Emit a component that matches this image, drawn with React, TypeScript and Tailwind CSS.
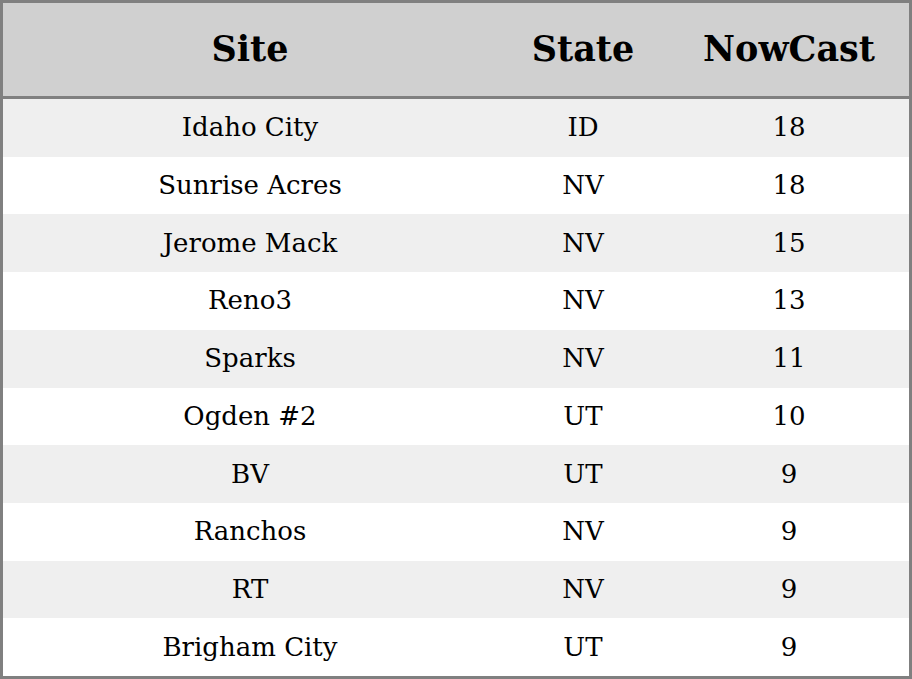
const rows = [
  { site: "Idaho City", state: "ID", nowcast: 18 },
  { site: "Sunrise Acres", state: "NV", nowcast: 18 },
  { site: "Jerome Mack", state: "NV", nowcast: 15 },
  { site: "Reno3", state: "NV", nowcast: 13 },
  { site: "Sparks", state: "NV", nowcast: 11 },
  { site: "Ogden #2", state: "UT", nowcast: 10 },
  { site: "BV", state: "UT", nowcast: 9 },
  { site: "Ranchos", state: "NV", nowcast: 9 },
  { site: "RT", state: "NV", nowcast: 9 },
  { site: "Brigham City", state: "UT", nowcast: 9 },
];

export default function App() {
  return (
    <div className="w-[912px] h-[679px] border-[3px] border-[#808080] bg-white font-['DejaVu_Serif',serif] text-black flex flex-col">
      {/* Header */}
      <div className="grid grid-cols-[494px_172px_240px] h-[96px] shrink-0 items-center bg-[#d0d0d0] border-b-[3px] border-[#808080] text-[35px] font-bold">
        <div className="text-center">Site</div>
        <div className="text-center">State</div>
        <div className="text-center">NowCast</div>
      </div>

      {/* Rows */}
      <div className="flex-1 flex flex-col">
        {rows.map((r, i) => (
          <div
            key={r.site}
            className={
              "flex-1 grid grid-cols-[494px_172px_240px] items-center text-[26px] " +
              (i % 2 === 0 ? "bg-[#efefef]" : "bg-white")
            }
          >
            <div className="text-center">{r.site}</div>
            <div className="text-center">{r.state}</div>
            <div className="text-center">{r.nowcast}</div>
          </div>
        ))}
      </div>
    </div>
  );
}
